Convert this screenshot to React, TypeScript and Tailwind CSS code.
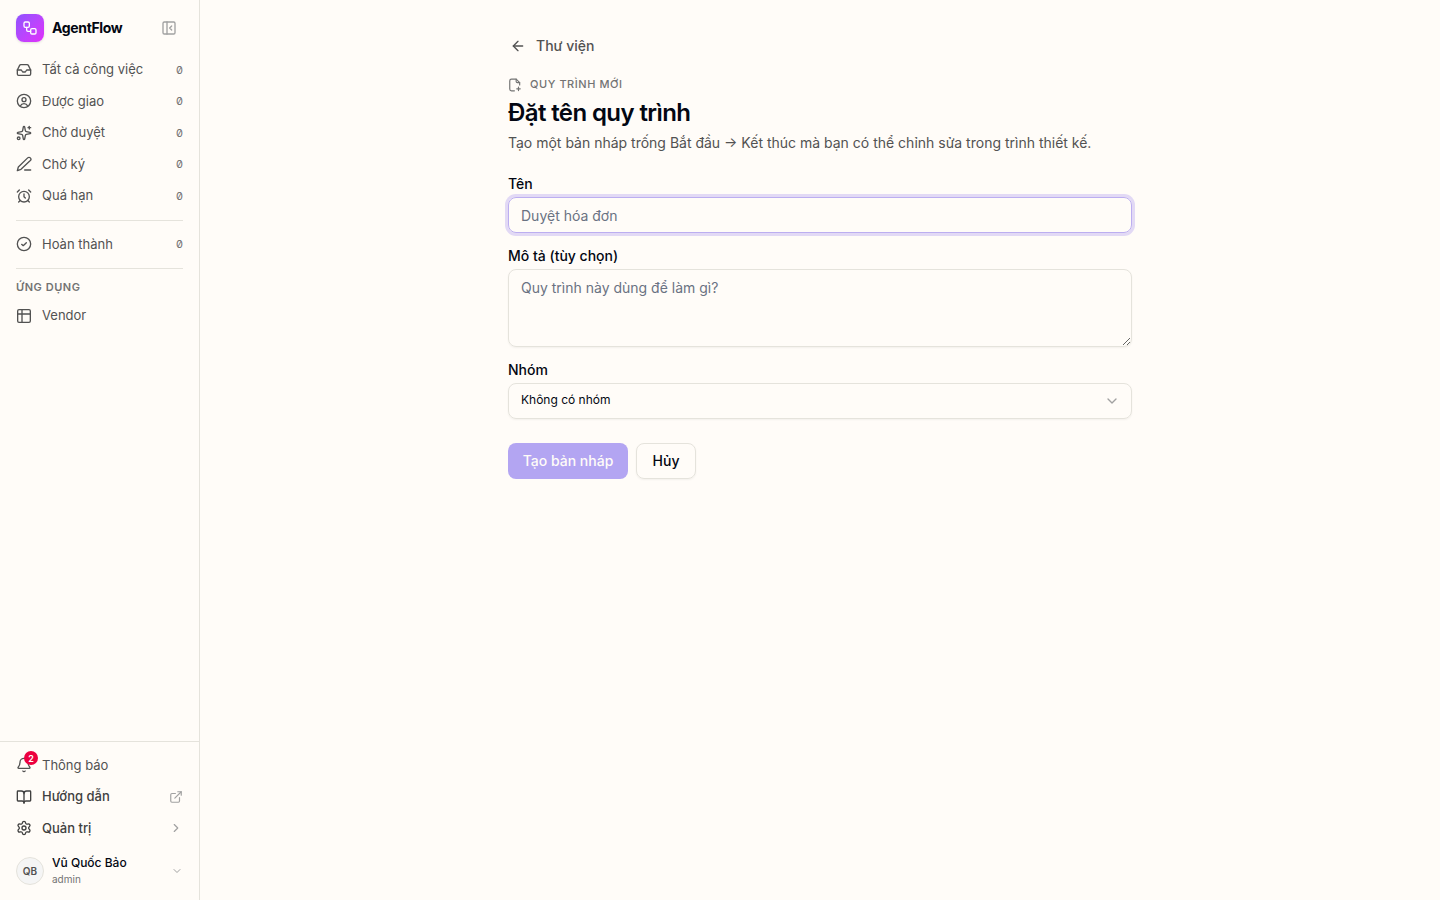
import type { ReactNode } from "react"
import {
  AlarmClock,
  ArrowLeft,
  Bell,
  BookOpen,
  ChevronDown,
  ChevronRight,
  ExternalLink,
  Inbox,
  PanelLeftClose,
  Settings,
  Sparkles,
  Workflow,
} from "lucide-react"

function Svg({ children, className }: { children: ReactNode; className: string }) {
  return (
    <svg
      viewBox="0 0 24 24"
      fill="none"
      stroke="currentColor"
      strokeWidth="2"
      strokeLinecap="round"
      strokeLinejoin="round"
      aria-hidden="true"
      className={className}
    >
      {children}
    </svg>
  )
}

const icon = "size-4 shrink-0"

const tasks = [
  { label: "Tất cả công việc", icon: <Inbox className={icon} /> },
  {
    label: "Được giao",
    icon: (
      <Svg className={icon}>
        <circle cx="12" cy="12" r="10" />
        <circle cx="12" cy="10" r="3" />
        <path d="M6.5 19.5a6 6 0 0 1 11 0" />
      </Svg>
    ),
  },
  { label: "Chờ duyệt", icon: <Sparkles className={icon} /> },
  {
    label: "Chờ ký",
    icon: (
      <Svg className={icon}>
        <path d="M13 21h9" />
        <path d="M17.5 2.8a2.8 2.8 0 0 1 4 4L7.5 20 2 22l1.5-5.5z" />
      </Svg>
    ),
  },
  { label: "Quá hạn", icon: <AlarmClock className={icon} /> },
]

function NavItem({ label, icon, count }: { label: string; icon: ReactNode; count?: number }) {
  return (
    <a href="#" className="flex items-center gap-2.5 py-1.5 text-[13px] leading-normal text-neutral-600">
      {icon}
      <span className="flex-1 truncate">{label}</span>
      {count !== undefined && <span className="text-[11px] text-neutral-500 slashed-zero">{count}</span>}
    </a>
  )
}

function Sidebar() {
  return (
    <aside className="flex w-[200px] shrink-0 flex-col border-r border-[#e5e3dc]">
      <div className="flex items-center gap-2 px-4 pt-3.5 pb-3">
        <span className="flex size-7 items-center justify-center rounded-lg bg-linear-to-br from-[#8e51ff] to-[#e12afb] text-white shadow-sm">
          <Workflow className="size-4" />
        </span>
        <span className="flex-1 text-sm font-bold tracking-tight text-gray-950">AgentFlow</span>
        <button type="button" aria-label="Thu gọn" className="mr-1.5 text-neutral-400">
          <PanelLeftClose className="size-4" />
        </button>
      </div>

      <nav className="flex-1 px-4">
        {tasks.map((task) => (
          <NavItem key={task.label} label={task.label} icon={task.icon} count={0} />
        ))}
        <hr className="my-2 border-[#e5e3dc]" />
        <NavItem
          label="Hoàn thành"
          count={0}
          icon={
            <Svg className={icon}>
              <circle cx="12" cy="12" r="10" />
              <path d="m8.5 12.5 2.3 2 4.7-4.5" />
            </Svg>
          }
        />
        <hr className="my-2 border-[#e5e3dc]" />
        <h2 className="pt-0.5 pb-[5px] text-[11px] leading-4 font-semibold tracking-wider text-neutral-500">
          ỨNG DỤNG
        </h2>
        <NavItem
          label="Vendor"
          icon={
            <Svg className={icon}>
              <rect x="2.5" y="2.5" width="19" height="19" rx="2" />
              <path d="M2.5 9h19M9 2.5v19" />
            </Svg>
          }
        />
      </nav>

      <div className="border-t border-[#e5e3dc] px-4 pt-2 pb-3">
        <NavItem
          label="Thông báo"
          icon={
            <span className="relative">
              <Bell className={icon} />
              <span className="absolute -top-1.5 left-2 flex size-3.5 items-center justify-center rounded-full bg-[#ec003f] text-[9px] leading-none font-semibold text-white">
                2
              </span>
            </span>
          }
        />
        <a href="#" className="flex items-center gap-2.5 py-1.5 text-[13px] leading-normal font-medium text-neutral-700">
          <BookOpen className={icon} />
          <span className="flex-1">Hướng dẫn</span>
          <ExternalLink className="size-3.5 text-neutral-400" />
        </a>
        <button
          type="button"
          className="flex w-full items-center gap-2.5 py-1.5 text-left text-[13px] leading-normal font-medium text-neutral-700"
        >
          <Settings className={icon} />
          <span className="flex-1">Quản trị</span>
          <ChevronRight className="size-3.5 text-neutral-400" />
        </button>
        <button type="button" className="mt-2.5 flex w-full items-center gap-2 text-left">
          <span className="flex size-7 items-center justify-center rounded-full border border-[#e5e3dc] bg-neutral-100 text-[10px] font-semibold text-neutral-600">
            QB
          </span>
          <span className="flex-1 leading-[17px]">
            <span className="block text-[12px] font-medium text-gray-950">Vũ Quốc Bảo</span>
            <span className="block text-[10px] text-neutral-500">admin</span>
          </span>
          <ChevronDown className="size-3 text-neutral-400" />
        </button>
      </div>
    </aside>
  )
}

export default function App() {
  return (
    <div className="flex min-h-screen bg-[#fffcf8] font-['Inter',sans-serif] text-gray-950">
      <Sidebar />
      <main className="flex-1">
        <div className="mx-auto max-w-2xl px-6 py-8">
          <a href="#" className="flex h-7 w-fit items-center gap-2.5 px-0.5 text-sm font-medium text-neutral-600">
            <ArrowLeft className="size-4" />
            Thư viện
          </a>

          <header className="mt-4">
            <p className="flex items-center gap-2 text-[11px] leading-[17px] font-medium tracking-wider text-neutral-500">
              <Svg className="size-3.5">
                <path d="M11 22H6a3 3 0 0 1-3-3V5a3 3 0 0 1 3-3h8l6 6v4" />
                <path d="M14 2v4a2 2 0 0 0 2 2h4" />
                <path d="M18 15.5v6M15 18.5h6" />
              </Svg>
              QUY TRÌNH MỚI
            </p>
            <h1 className="mt-1 text-2xl font-semibold tracking-tight">Đặt tên quy trình</h1>
            <p className="mt-1 text-sm text-neutral-600">
              Tạo một bản nháp trống Bắt đầu → Kết thúc mà bạn có thể chỉnh sửa trong trình thiết kế.
            </p>
          </header>

          <form className="mt-6 flex flex-col gap-4 text-sm">
            <div className="flex flex-col gap-1.5">
              <label htmlFor="name" className="leading-[14px] font-medium">
                Tên
              </label>
              <input
                id="name"
                placeholder="Duyệt hóa đơn"
                className="h-9 w-full rounded-lg border border-[#bcaef0] px-3 shadow-xs ring-3 ring-[#e2d9f5] outline-none placeholder:text-gray-500"
              />
            </div>
            <div className="flex flex-col gap-1.5">
              <label htmlFor="description" className="leading-[14px] font-medium">
                Mô tả (tùy chọn)
              </label>
              <textarea
                id="description"
                rows={3}
                placeholder="Quy trình này dùng để làm gì?"
                className="w-full rounded-lg border border-[#e5e3dc] px-3 py-2 shadow-xs outline-none placeholder:text-gray-500"
              />
            </div>
            <div className="flex flex-col gap-1.5">
              <label htmlFor="group" className="leading-[14px] font-medium">
                Nhóm
              </label>
              <div className="relative">
                <select
                  id="group"
                  className="block h-9 w-full appearance-none rounded-lg border border-[#e5e3dc] px-3 pb-0.5 text-xs shadow-xs outline-none"
                >
                  <option>Không có nhóm</option>
                </select>
                <ChevronDown className="pointer-events-none absolute top-2.5 right-3 size-4 text-neutral-400" />
              </div>
            </div>
            <div className="mt-2 flex gap-2">
              <button type="submit" disabled className="h-9 w-30 rounded-lg bg-[#b3a5f2] font-medium text-[#fffcf8]">
                Tạo bản nháp
              </button>
              <button type="button" className="h-9 w-15 rounded-lg border border-[#e5e3dc] font-medium shadow-xs">
                Hủy
              </button>
            </div>
          </form>
        </div>
      </main>
    </div>
  )
}
